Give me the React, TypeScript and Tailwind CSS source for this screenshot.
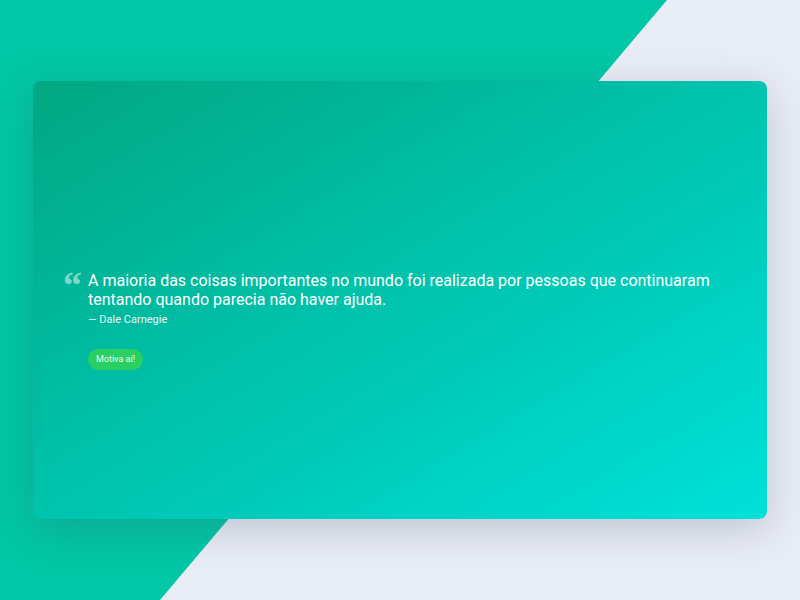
export default function App() {
  return (
    <div className="relative h-[600px] w-[800px] overflow-hidden bg-[#e9edf5] font-['Roboto',sans-serif]">
      {/* diagonal backdrop */}
      <div className="absolute inset-0 bg-[#00c7a5] [clip-path:polygon(0_0,667px_0,160px_100%,0_100%)]" />

      <div className="relative flex h-full items-center justify-center">
        <div className="flex h-[438px] w-[734px] flex-col justify-center rounded-lg bg-gradient-to-br from-[#02a782] to-[#00e1da] pl-[30px] pr-[40px] pt-[40px] shadow-[0_10px_40px_rgba(60,70,100,0.25)]">
          <div className="flex gap-[8px]">
            <span className="mt-[-1px] w-[17px] font-['Liberation_Serif',serif] text-[38px] font-bold leading-[30px] text-white/50">
              &ldquo;
            </span>
            <div>
              <p className="text-[16px] leading-[19px] text-white">
                A maioria das coisas importantes no mundo foi realizada por pessoas que continuaram tentando quando parecia não haver ajuda.
              </p>
              <p className="mt-[3px] text-[11px] text-white/90">— Dale Carnegie</p>
              <button className="mt-[21px] rounded-full bg-[#29cf63] px-[8px] py-[3.5px] text-[9px] text-white/90">
                Motiva aí!
              </button>
            </div>
          </div>
        </div>
      </div>
    </div>
  );
}
